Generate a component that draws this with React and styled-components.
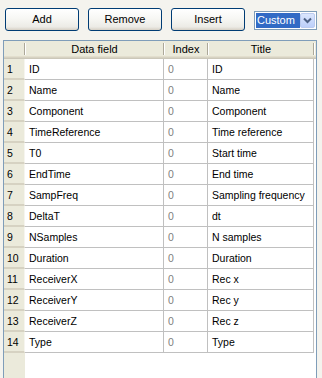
import React from "react";
import styled, { createGlobalStyle } from "styled-components";

const Global = createGlobalStyle`
  html, body { margin: 0; padding: 0; background: #f4f3ee; }
  body { font-family: "Liberation Sans", "DejaVu Sans", sans-serif; font-size: 11px; color: #000; }
  #root { height: 378px; overflow: hidden; }
`;

const Page = styled.div`
  display: flex;
  flex-direction: column;
  height: 378px;
`;

const Toolbar = styled.div`
  display: flex;
  align-items: center;
  gap: 9px;
  padding: 8px 0 0 5px;
  height: 22px;
`;

const Button = styled.button`
  width: 74px;
  height: 23px;
  box-sizing: border-box;
  border: 1px solid #003c74;
  border-radius: 3px;
  background: linear-gradient(#ffffff 0%, #f7f7f4 45%, #ecebe6 85%, #d6d0c5 100%);
  font-family: "Liberation Sans", sans-serif;
  font-size: 11px;
  color: #000;
  padding: 0;
`;

const Select = styled.div`
  display: flex;
  width: 63px;
  height: 19px;
  box-sizing: border-box;
  border: 1px solid #7f9db9;
  background: #fff;
  padding: 1px;
  margin-top: 3px;
`;

const SelectText = styled.div`
  flex: 1;
  background: #316ac5;
  color: #fff;
  font-family: "Liberation Sans", sans-serif;
  font-size: 11px;
  line-height: 15px;
  padding-left: 1px;
`;

const Arrow = styled.div`
  width: 15px;
  height: 15px;
  box-sizing: border-box;
  border: 1px solid #bbcbef;
  border-radius: 2px;
  background: linear-gradient(#dbe6fd, #bccffa);
  display: flex;
  align-items: center;
  justify-content: center;
`;

const Frame = styled.div`
  margin: 10px 0 0 3px;
  width: 314px;
  flex: 1;
  box-sizing: border-box;
  border: 1px solid #7f9db9;
  border-bottom: none;
  background: #fff;
  display: flex;
  flex-direction: column;
`;

const cols = "21px 139px 44px 106px";

const Header = styled.div`
  display: grid;
  grid-template-columns: ${cols};
  height: 18px;
  background: #ebeadb;
  box-shadow: inset 0 -1px 0 #cbc7b8, inset 0 -2px 0 #d6d2c2, inset 0 -3px 0 #e2decd;
`;

const HeadCell = styled.div`
  position: relative;
  text-align: center;
  line-height: 16px;
  font-size: 11px;
  &::after {
    content: "";
    position: absolute;
    right: 0;
    top: 2px;
    bottom: 4px;
    width: 1px;
    background: #aca899;
    box-shadow: 1px 0 0 #fff;
  }
`;

const Body = styled.div`
  flex: 1;
  display: grid;
  grid-template-columns: ${cols};
  grid-auto-rows: 21px;
  align-content: start;
  background: linear-gradient(to right, #ebeadb 21px, #fff 21px);
`;

const NumCell = styled.div`
  box-sizing: border-box;
  background: #ebeadb;
  border-bottom: 2px solid #d6d2c2;
  border-right: 1px solid #f6f5ef;
  padding-left: 3px;
  line-height: 21px;
  font-size: 10.5px;
`;

const Cell = styled.div`
  box-sizing: border-box;
  border-bottom: 1px solid #c0c0c0;
  border-right: 1px solid #c0c0c0;
  padding-left: 4px;
  line-height: 20px;
  font-size: 10.5px;
  color: ${p => (p.$muted ? "#808080" : "#000")};
  white-space: nowrap;
  overflow: hidden;
`;

const rows = [
  ["ID", "ID"],
  ["Name", "Name"],
  ["Component", "Component"],
  ["TimeReference", "Time reference"],
  ["T0", "Start time"],
  ["EndTime", "End time"],
  ["SampFreq", "Sampling frequency"],
  ["DeltaT", "dt"],
  ["NSamples", "N samples"],
  ["Duration", "Duration"],
  ["ReceiverX", "Rec x"],
  ["ReceiverY", "Rec y"],
  ["ReceiverZ", "Rec z"],
  ["Type", "Type"],
];

export default function App() {
  return (
    <Page>
      <Global />
      <Toolbar>
        <Button>Add</Button>
        <Button>Remove</Button>
        <Button>Insert</Button>
        <Select>
          <SelectText>Custom</SelectText>
          <Arrow>
            <svg width="9" height="7" viewBox="0 0 9 7">
              <path d="M1 1.5 L4.5 5 L8 1.5" fill="none" stroke="#4d6185" strokeWidth="2" />
            </svg>
          </Arrow>
        </Select>
      </Toolbar>
      <Frame>
        <Header>
          <HeadCell />
          <HeadCell>Data field</HeadCell>
          <HeadCell>Index</HeadCell>
          <HeadCell>Title</HeadCell>
        </Header>
        <Body>
          {rows.map(([f, t], i) => (
            <React.Fragment key={f}>
              <NumCell>{i + 1}</NumCell>
              <Cell>{f}</Cell>
              <Cell $muted>0</Cell>
              <Cell>{t}</Cell>
            </React.Fragment>
          ))}
        </Body>
      </Frame>
    </Page>
  );
}
